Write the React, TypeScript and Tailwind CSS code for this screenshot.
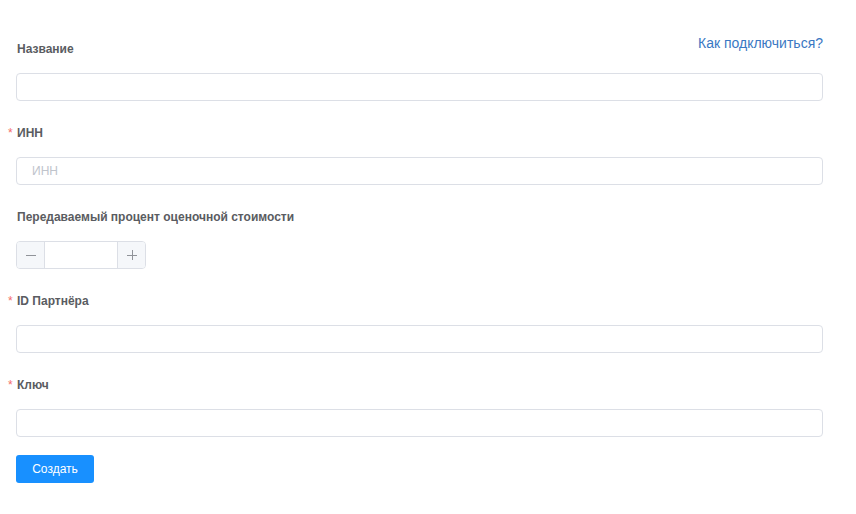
import { ReactNode } from 'react'

const Label = ({ children, required }: { children: ReactNode; required?: boolean }) => (
  <div className="relative pl-px text-[12px] leading-5 font-bold text-[#5a5c61]">
    {required && <span className="absolute -left-[8px] top-0 text-[#f56c6c] font-normal">*</span>}
    {children}
  </div>
)

const TextInput = ({ placeholder }: { placeholder?: string }) => (
  <input
    className="block w-full h-7 rounded-[4px] border border-[#dcdfe6] bg-white px-[15px] text-[12px] text-[#606266] outline-none placeholder:text-[#c0c4cc]"
    placeholder={placeholder}
  />
)

const Field = ({ label, required, children }: { label: string; required?: boolean; children: ReactNode }) => (
  <div className="mb-[22px]">
    <div className="mb-[14px]">
      <Label required={required}>{label}</Label>
    </div>
    {children}
  </div>
)

export default function App() {
  return (
    <div className="min-h-screen bg-white pl-4 pr-[33px] pt-[39px] font-['Liberation_Sans',Arial,sans-serif]">
      {/* first field with help link */}
      <div className="mb-[22px]">
        <div className="mb-[14px] flex items-start justify-between">
          <Label>Название</Label>
          <a href="#" className="-mt-[6px] text-[14px] leading-5 text-[#3a78c3]">
            Как подключиться?
          </a>
        </div>
        <TextInput />
      </div>

      <Field label="ИНН" required>
        <TextInput placeholder="ИНН" />
      </Field>

      <Field label="Передаваемый процент оценочной стоимости">
        <div className="flex h-7 w-[130px] overflow-hidden rounded-[4px] border border-[#dcdfe6]">
          <button className="flex w-[28px] items-center justify-center border-r border-[#dcdfe6] bg-[#f5f7fa]">
            <svg width="10" height="10" viewBox="0 0 10 10">
              <path d="M0 5.5h10" stroke="#909399" strokeWidth="1" />
            </svg>
          </button>
          <input className="min-w-0 flex-1 bg-white px-2 text-center text-[12px] outline-none" />
          <button className="flex w-[28px] items-center justify-center border-l border-[#dcdfe6] bg-[#f5f7fa]">
            <svg width="10" height="10" viewBox="0 0 10 10">
              <path d="M0 5.5h10M5.5 0v10" stroke="#909399" strokeWidth="1" />
            </svg>
          </button>
        </div>
      </Field>

      <Field label="ID Партнёра" required>
        <TextInput />
      </Field>

      <div className="mb-[18px]">
        <div className="mb-[14px]">
          <Label required>Ключ</Label>
        </div>
        <TextInput />
      </div>

      <button className="h-7 w-[78px] rounded-[3px] bg-[#1890ff] text-[12px] text-white">Создать</button>
    </div>
  )
}
